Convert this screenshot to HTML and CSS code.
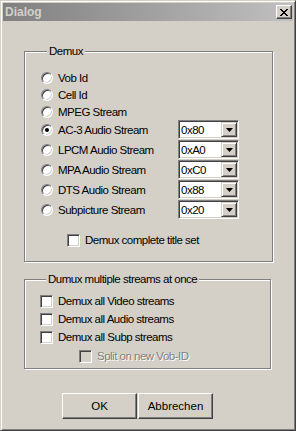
FILE: index.html
```html
<html>
<head>
    <title>Dialog</title>
    <link rel="stylesheet" href="styles.css">
</head>
<body>
    <div class="window">
        <div class="titlebar">
            <span class="title">Dialog</span>
            <span class="close">
                <svg width="8" height="7" viewBox="0 0 8 7" shape-rendering="crispEdges">
                    <path d="M0 0h2v1h-2z M6 0h2v1h-2z M1 1h2v1h-2z M5 1h2v1h-2z M2 2h4v1h-4z M3 3h2v1h-2z M2 4h4v1h-4z M1 5h2v1h-2z M5 5h2v1h-2z M0 6h2v1h-2z M6 6h2v1h-2z" fill="#000"/>
                </svg>
            </span>
        </div>
        <div class="client">
            <fieldset class="group demux">
                <legend>Demux</legend>
                <div class="opt"><span class="radio"></span><span class="label">Vob Id</span></div>
                <div class="opt"><span class="radio"></span><span class="label">Cell Id</span></div>
                <div class="opt"><span class="radio"></span><span class="label">MPEG Stream</span></div>
                <div class="opt combo-row"><span class="radio checked"></span><span class="label">AC-3 Audio Stream</span>
                    <span class="combo"><span class="combo-val">0x80</span><span class="combo-btn"><svg width="7" height="4" viewBox="0 0 7 4"><path d="M0 0h7l-3.5 4z" fill="#000"/></svg></span></span></div>
                <div class="opt combo-row"><span class="radio"></span><span class="label">LPCM Audio Stream</span>
                    <span class="combo"><span class="combo-val">0xA0</span><span class="combo-btn"><svg width="7" height="4" viewBox="0 0 7 4"><path d="M0 0h7l-3.5 4z" fill="#000"/></svg></span></span></div>
                <div class="opt combo-row"><span class="radio"></span><span class="label">MPA Audio Stream</span>
                    <span class="combo"><span class="combo-val">0xC0</span><span class="combo-btn"><svg width="7" height="4" viewBox="0 0 7 4"><path d="M0 0h7l-3.5 4z" fill="#000"/></svg></span></span></div>
                <div class="opt combo-row"><span class="radio"></span><span class="label">DTS Audio Stream</span>
                    <span class="combo"><span class="combo-val">0x88</span><span class="combo-btn"><svg width="7" height="4" viewBox="0 0 7 4"><path d="M0 0h7l-3.5 4z" fill="#000"/></svg></span></span></div>
                <div class="opt combo-row"><span class="radio"></span><span class="label">Subpicture Stream</span>
                    <span class="combo"><span class="combo-val">0x20</span><span class="combo-btn"><svg width="7" height="4" viewBox="0 0 7 4"><path d="M0 0h7l-3.5 4z" fill="#000"/></svg></span></span></div>
                <div class="opt title-set"><span class="check"></span><span>Demux complete title set</span></div>
            </fieldset>
            <fieldset class="group multi">
                <legend>Dumux multiple streams at once</legend>
                <div class="opt"><span class="check"></span><span>Demux all Video streams</span></div>
                <div class="opt"><span class="check"></span><span>Demux all Audio streams</span></div>
                <div class="opt"><span class="check"></span><span>Demux all Subp streams</span></div>
                <div class="opt split disabled"><span class="check"></span><span>Split on new Vob-ID</span></div>
            </fieldset>
            <div class="buttons">
                <button type="button" class="btn">OK</button>
                <button type="button" class="btn">Abbrechen</button>
            </div>
        </div>
    </div>
</body>
</html>
```

FILE: styles.css
```css
body {
    margin: 0;
    padding: 0;
    background: #d4d0c8;
    font-family: "Liberation Sans", Arial, sans-serif;
    font-size: 11.5px;
    letter-spacing: -0.5px;
    color: #000;
}
.window {
    width: 296px;
    height: 431px;
    box-sizing: border-box;
    padding: 2px;
    border: 1px solid;
    border-color: #d4d0c8 #404040 #404040 #d4d0c8;
    box-shadow: inset 1px 1px #fff, inset -1px -1px #808080;
    background: #d4d0c8;
}
.titlebar {
    height: 18px;
    display: flex;
    align-items: center;
    justify-content: space-between;
    padding-left: 2px;
    background: linear-gradient(to right, #808080, #c0c0c0);
}
.title {
    font-weight: bold;
    font-size: 12px;
    letter-spacing: 0;
    color: #d4d0c8;
}
.close {
    width: 16px;
    height: 14px;
    box-sizing: border-box;
    margin-right: 1px;
    display: flex;
    align-items: center;
    justify-content: center;
    background: #d4d0c8;
    border: 1px solid;
    border-color: #fff #404040 #404040 #fff;
    box-shadow: inset -1px -1px #808080;
}
.client {
    padding-left: 21px;
}

/* group boxes */
.group {
    margin: 0;
    padding: 0;
    border: 1px solid #808080;
    box-shadow: inset 1px 1px #fff, 1px 1px #fff;
    min-width: 0;
}
.group legend {
    margin-left: 6px;
    padding: 0 2px;
    line-height: 14px;
    background: #d4d0c8;
}
.demux {
    width: 249px;
    box-sizing: border-box;
    margin-top: 23px;
    padding: 11px 0 12px 16px;
}
.multi {
    width: 247px;
    box-sizing: border-box;
    margin-top: 10px;
    padding: 6px 0 3px 15px;
}
.opt {
    display: flex;
    align-items: center;
    height: 17px;
    white-space: nowrap;
}
.multi .opt {
    height: 18px;
}
.combo-row {
    height: 20px;
}
.opt .label {
    width: 120px;
}
.title-set {
    margin-top: 11px;
    height: 18px;
    padding-left: 26px;
}
.multi .split {
    margin-top: 1px;
    padding-left: 39px;
}
.disabled {
    color: #808080;
    text-shadow: 1px 1px #fff;
}

/* radio / check */
.radio {
    flex: none;
    position: relative;
    width: 12px;
    height: 12px;
    box-sizing: border-box;
    margin-right: 5px;
    border-radius: 50%;
    background: #fff;
    border: 1px solid;
    border-color: #808080 #fff #fff #808080;
    box-shadow: inset 1px 1px #404040, inset -1px -1px #d4d0c8;
}
.radio.checked::after {
    content: "";
    position: absolute;
    left: 3px;
    top: 3px;
    width: 4px;
    height: 4px;
    border-radius: 50%;
    background: #000;
}
.check {
    flex: none;
    width: 13px;
    height: 13px;
    box-sizing: border-box;
    margin-right: 5px;
    background: #fff;
    border: 1px solid;
    border-color: #808080 #fff #fff #808080;
    box-shadow: inset 1px 1px #404040, inset -1px -1px #d4d0c8;
}
.disabled .check {
    background: #d4d0c8;
}

/* combo boxes */
.combo {
    flex: none;
    align-self: flex-start;
    width: 61px;
    height: 19px;
    box-sizing: border-box;
    padding: 1px;
    display: flex;
    align-items: stretch;
    background: #fff;
    border: 1px solid;
    border-color: #808080 #fff #fff #808080;
    box-shadow: inset 1px 1px #404040, inset -1px -1px #d4d0c8;
}
.combo-val {
    flex: 1;
    display: flex;
    align-items: center;
    padding-left: 1px;
}
.combo-btn {
    width: 16px;
    box-sizing: border-box;
    display: flex;
    align-items: center;
    justify-content: center;
    background: #d4d0c8;
    border: 1px solid;
    border-color: #d4d0c8 #404040 #404040 #d4d0c8;
    box-shadow: inset 1px 1px #fff, inset -1px -1px #808080;
}

/* buttons */
.buttons {
    display: flex;
    gap: 1px;
    margin-top: 24px;
    padding-left: 38px;
}
.btn {
    width: 75px;
    height: 26px;
    padding: 0;
    font: inherit;
    color: #000;
    background: #d4d0c8;
    border: 1px solid;
    border-color: #fff #404040 #404040 #fff;
    box-shadow: inset -1px -1px #808080;
}
```
